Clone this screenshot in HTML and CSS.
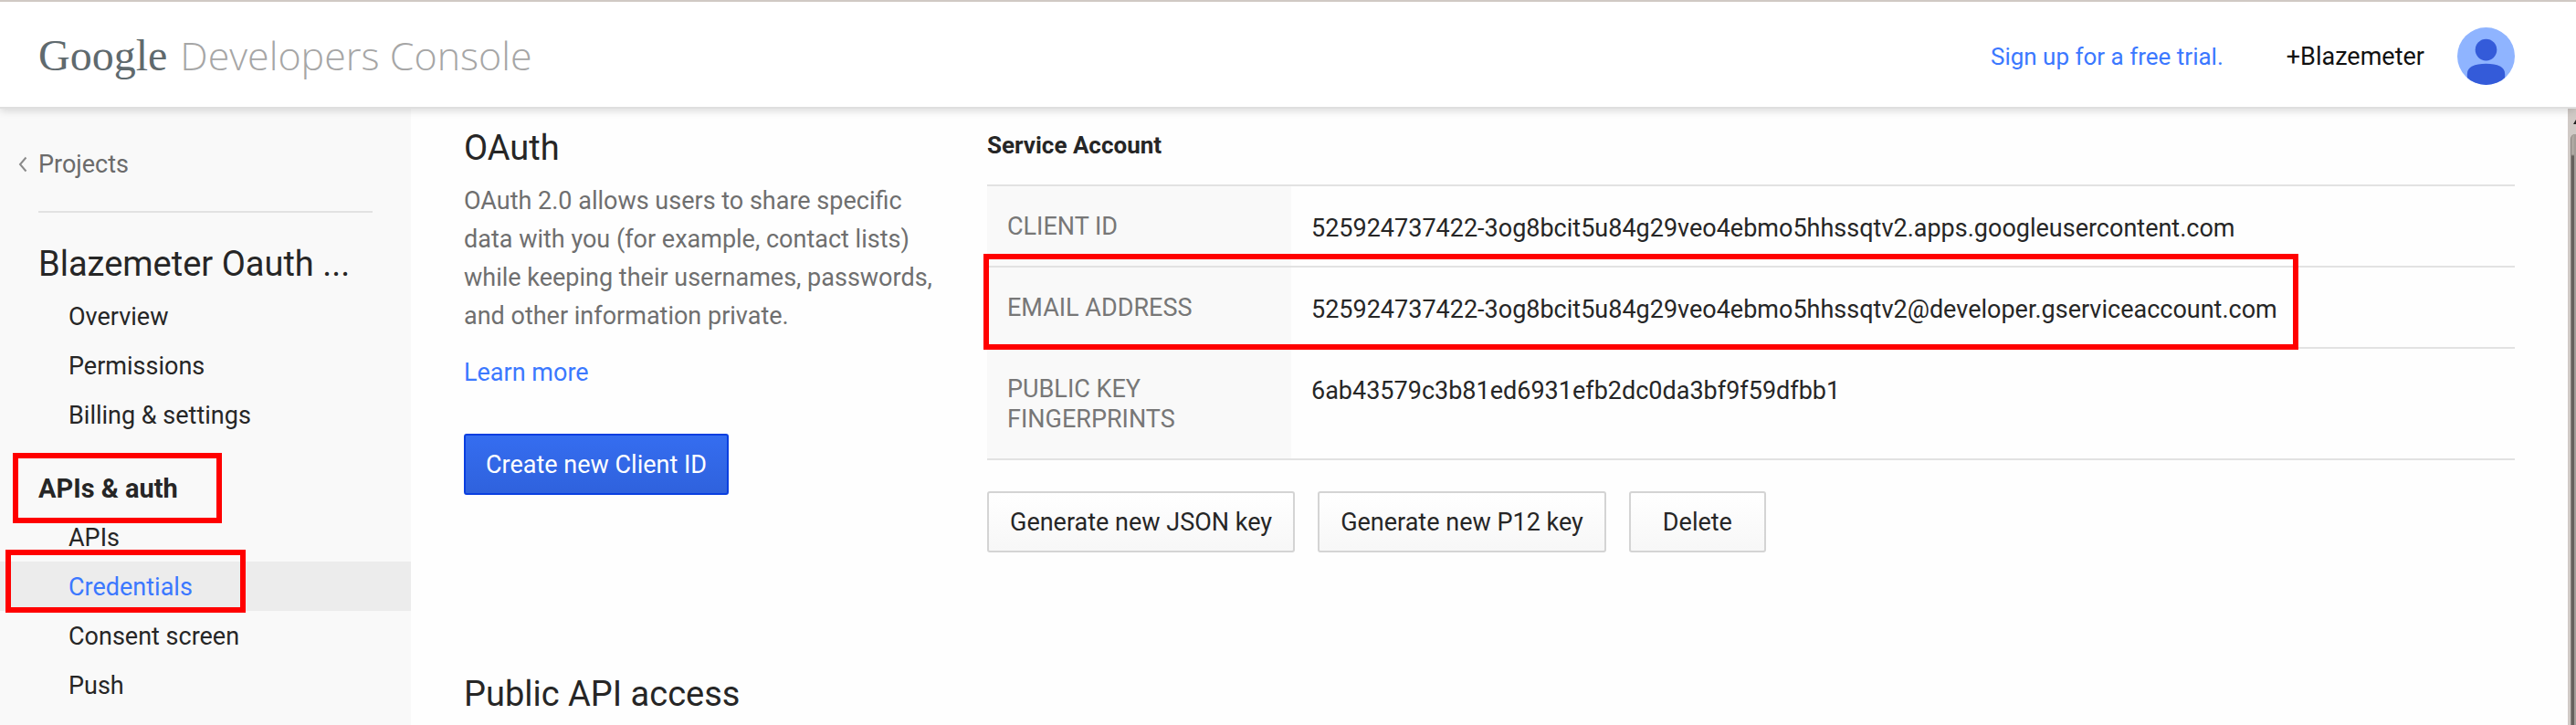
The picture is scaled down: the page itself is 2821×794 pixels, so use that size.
FILE: index.html
```html
<!DOCTYPE html>
<html lang="en">
<head>
<meta charset="utf-8">
<title>Google Developers Console</title>
<link rel="stylesheet" href="styles.css">
</head>
<body>
<header class="topbar">
  <div class="brand"><span class="brand-google">Google</span><span class="brand-product">Developers Console</span></div>
  <div class="account">
    <a class="link trial" href="#">Sign up for a free trial.</a>
    <a class="user" href="#">+Blazemeter</a>
    <svg class="avatar" viewBox="0 0 64 64" role="img" aria-label="Account">
      <defs><clipPath id="disc"><circle cx="32" cy="32" r="32"/></clipPath></defs>
      <circle cx="32" cy="32" r="32" fill="#8fb4ff"/>
      <g fill="#345bd9" clip-path="url(#disc)">
        <circle cx="32" cy="25" r="12"/>
        <path d="M11 54V52C11 44 19 40.500 32 40.500S53 44 53 52V64H11Z"/>
      </g>
    </svg>
  </div>
</header>
<div class="layout">
  <nav class="sidebar">
    <a class="back" href="#"><svg class="chevron" viewBox="0 0 10 18" aria-hidden="true"><path d="M8.500 1.500L2 9L8.500 16.500"/></svg>Projects</a>
    <h2 class="project">Blazemeter Oauth ...</h2>
    <ul class="menu">
      <li><a href="#">Overview</a></li>
      <li><a href="#">Permissions</a></li>
      <li><a href="#">Billing &amp; settings</a></li>
    </ul>
    <h3 class="group"><span class="marked marked-group">APIs &amp; auth</span></h3>
    <ul class="menu">
      <li><a href="#">APIs</a></li>
      <li><a class="active" href="#"><span class="marked marked-item">Credentials</span></a></li>
      <li><a href="#">Consent screen</a></li>
      <li><a href="#">Push</a></li>
    </ul>
  </nav>
  <main class="content">
    <section class="oauth">
      <div class="intro">
        <h1 class="title">OAuth</h1>
        <p class="about">OAuth 2.0 allows users to share specific data with you (for example, contact lists) while keeping their usernames, passwords, and other information private.</p>
        <p class="more"><a class="link" href="#">Learn more</a></p>
        <button class="btn btn-primary" type="button">Create new Client ID</button>
      </div>
      <div class="details">
        <h2 class="subtitle">Service Account</h2>
        <table class="keys">
          <tr><th scope="row">CLIENT ID</th><td>525924737422-3og8bcit5u84g29veo4ebmo5hhssqtv2.apps.googleusercontent.com</td></tr>
          <tr class="marked marked-row"><th scope="row">EMAIL ADDRESS</th><td>525924737422-3og8bcit5u84g29veo4ebmo5hhssqtv2@developer.gserviceaccount.com</td></tr>
          <tr><th scope="row">PUBLIC KEY FINGERPRINTS</th><td>6ab43579c3b81ed6931efb2dc0da3bf9f59dfbb1</td></tr>
        </table>
        <div class="actions">
          <button class="btn" type="button">Generate new JSON key</button>
          <button class="btn" type="button">Generate new P12 key</button>
          <button class="btn btn-wide" type="button">Delete</button>
        </div>
      </div>
    </section>
    <h1 class="title">Public API access</h1>
  </main>
  <div class="scrollbar" aria-hidden="true">
    <svg class="scroll-arrow" viewBox="0 0 9 28"><path d="M9 12L6 17H9Z" fill="#222"/></svg>
    <div class="thumb"></div>
  </div>
</div>
</body>
</html>
```
FILE: styles.css
```css
* { box-sizing: border-box; }
body {
  margin: 0;
  min-height: 100vh;
  display: flex;
  flex-direction: column;
  background: #fefefe;
  color: #262626;
  font: 27px/42px Roboto, Arial, sans-serif;
}
h1, h2, h3, p, ul { margin: 0; padding: 0; font-weight: 400; }
ul { list-style: none; }
a { color: inherit; text-decoration: none; }
.link { color: #3b78ff; }

.topbar {
  position: relative;
  z-index: 2;
  display: flex;
  justify-content: space-between;
  align-items: center;
  height: 119px;
  padding: 4px 67px 0 42px;
  background: #fff;
  border-top: 2px solid #d0c9c4;
  border-bottom: 2px solid #dfdfdf;
  box-shadow: 0 3px 8px rgba(0, 0, 0, .13);
}
.brand { display: flex; align-items: baseline; gap: 14px; padding-bottom: 2px; white-space: nowrap; }
.brand-google { font: 48px/54px "Liberation Serif", "Times New Roman", serif; color: #5f6a6e; }
.brand-product { font: 300 43px/54px "Open Sans", sans-serif; color: #a6a6a6; }
.account { display: flex; align-items: center; }
.trial { font-size: 26px; }
.user { margin: 0 36px 0 69px; color: #111; }
.avatar { width: 63px; height: 63px; }

.layout { flex: 1; display: flex; }
.sidebar { flex: none; width: 450px; padding-top: 40px; background: #f9f9f9; }
.back {
  display: flex;
  align-items: center;
  margin: 0 42px 0 20px;
  color: #6b6b6b;
}
.chevron { width: 10px; height: 18px; margin-right: 12px; fill: none; stroke: #8a8a8a; stroke-width: 2; }
.project { margin: 30px 42px 0; padding-top: 32px; border-top: 2px solid #e2e2e2; font-size: 38px; line-height: 48px; white-space: nowrap; }
.menu a { display: block; padding: 2px 0 0 75px; line-height: 52px; }
.project + .menu { margin-top: 6px; }
.menu .active { background: #ececec; color: #3b78ff; }
.group { padding: 34px 42px 6px; font-size: 29px; line-height: 40px; font-weight: 700; }

.marked { position: relative; }
.marked::after { content: ""; position: absolute; z-index: 1; border: 6px solid #f00; pointer-events: none; }
.marked-group::after { inset: -22px -48px -21px -28px; }
.marked-item::after { inset: -15px -58px -2px -69px; }
.menu .marked { display: inline-block; }

.content { flex: 1; min-width: 0; padding: 20px 58px 0; }
.oauth { display: grid; grid-template-columns: 515px 1fr; column-gap: 58px; margin-bottom: 132px; }
.title { font-size: 38px; line-height: 46px; }
.about { margin-top: 14px; color: #6f6f6f; }
.more { margin: 20px 0 46px; }
.subtitle { font-size: 26px; line-height: 40px; font-weight: 700; }
.keys { width: 100%; margin: 23px 0 34px; border-collapse: collapse; }
.keys th, .keys td { border: solid #e2e2e2; border-width: 2px 0; vertical-align: top; text-align: left; font-weight: 400; }
.keys th { width: 333px; padding: 28px 22px 26px; background: #f9f9f9; color: #777; line-height: 33px; }
.keys td { padding: 25px 22px 0; }
.marked-row::after { inset: -14px 237px -2px -4px; }
.actions { display: flex; gap: 25px; }
.btn {
  height: 67px;
  padding: 0 23px;
  border: 2px solid #d4d4d4;
  border-radius: 3px;
  background: linear-gradient(#fff, #f7f7f7);
  color: #262626;
  font: inherit;
  white-space: nowrap;
}
.btn-wide { padding: 0 35px; }
.btn-primary { padding: 0 22px; border-color: #0a3fe0; background: linear-gradient(#356df0, #2f62dd); color: #fff; }

.scrollbar { flex: none; display: flex; flex-direction: column; width: 9px; background: #d0cac6; }
.scroll-arrow { width: 9px; height: 28px; }
.thumb {
  flex: 1;
  margin-left: 3px;
  border-left: 1px solid #8a8480;
  border-right: 2px solid #a39d98;
  border-top-left-radius: 5px;
  background: linear-gradient(#aea8a2 22px, #66615d 24px);
}
```
